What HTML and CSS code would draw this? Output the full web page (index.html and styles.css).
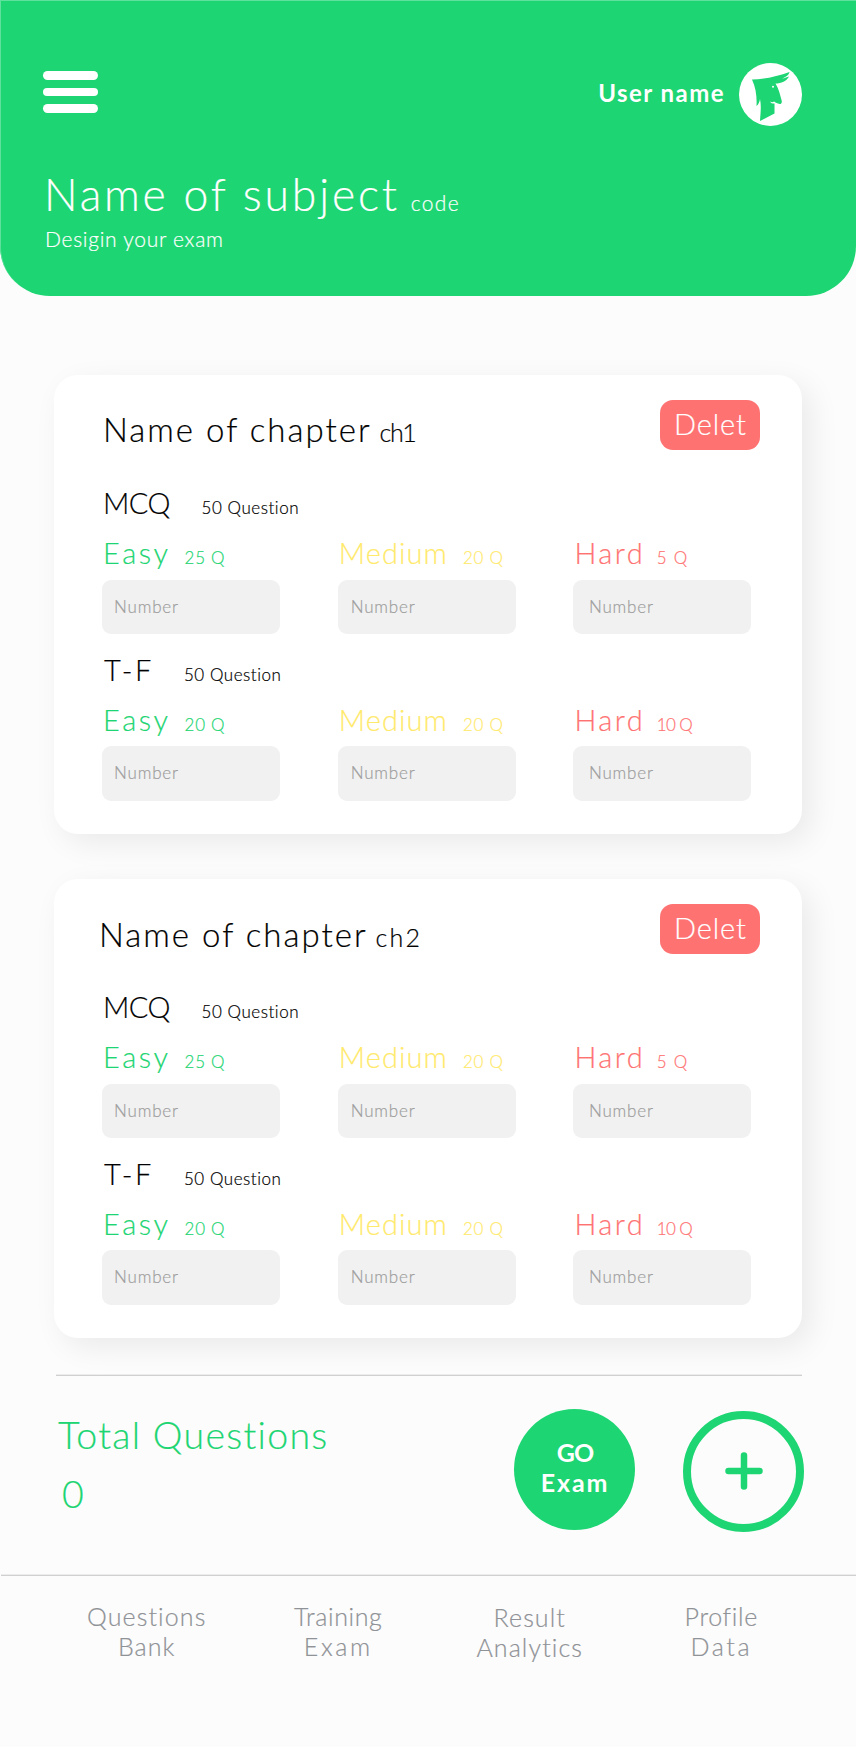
FILE: index.html
```html
<!DOCTYPE html>
<html lang="en">
<head>
<meta charset="utf-8">
<title>Design your exam</title>
<link rel="stylesheet" href="styles.css">
</head>
<body>
<header class="header">
  <div class="topbar">
    <div class="menu"><i></i><i></i><i></i></div>
    <div class="user">
      <span class="user-name">User name</span>
      <svg class="avatar" viewBox="0 0 63 63">
        <circle cx="31.5" cy="31.5" r="31.5" fill="#fff"/>
        <path fill="#1dd572" d="M13 16.5 C26 16.5 39 13 50.500 9 C50 12 47 14 43 15.500 C46 15.200 48 14 50 13.500 C48 18 42 20.500 36.500 20.500 C40 26 41 32 42.800 38 C43 41 41 41.500 39 40.500 C37 40 35.500 38.800 35 38.500 C34 39.500 32.500 39.500 31 38.500 C32 40.500 34 40.700 35.500 40.500 L35.500 50.500 L21 58 C21.500 50 22.500 43 21 36 C20.500 39 19.500 41.500 17.500 43 C18 34 17 25 13 16.500 Z"/>
        <circle cx="34" cy="23.800" r="1" fill="#fff"/>
      </svg>
    </div>
  </div>
  <h1 class="title">Name of subject<span class="code">code</span></h1>
  <p class="subtitle">Desigin your exam</p>
</header>

<main class="main">
  <section class="card">
    <div class="card-head">
      <h2 class="chapter">Name of chapter<span class="chapter-code one">ch1</span></h2>
      <span class="delete">Delet</span>
    </div>
    <div class="group">
      <h3 class="kind mcq">MCQ<small>50 Question</small></h3>
      <div class="levels">
        <div class="level easy"><div class="label">Easy<small>25 Q</small></div><div class="field">Number</div></div>
        <div class="level medium"><div class="label">Medium<small>20 Q</small></div><div class="field">Number</div></div>
        <div class="level hard"><div class="label">Hard<small class="wide">5 Q</small></div><div class="field">Number</div></div>
      </div>
    </div>
    <div class="group">
      <h3 class="kind tf">T-F<small>50 Question</small></h3>
      <div class="levels">
        <div class="level easy"><div class="label">Easy<small>20 Q</small></div><div class="field">Number</div></div>
        <div class="level medium"><div class="label">Medium<small>20 Q</small></div><div class="field">Number</div></div>
        <div class="level hard"><div class="label">Hard<small class="tight">10 Q</small></div><div class="field">Number</div></div>
      </div>
    </div>
  </section>

  <section class="card second">
    <div class="card-head">
      <h2 class="chapter">Name of chapter<span class="chapter-code two">ch2</span></h2>
      <span class="delete">Delet</span>
    </div>
    <div class="group">
      <h3 class="kind mcq">MCQ<small>50 Question</small></h3>
      <div class="levels">
        <div class="level easy"><div class="label">Easy<small>25 Q</small></div><div class="field">Number</div></div>
        <div class="level medium"><div class="label">Medium<small>20 Q</small></div><div class="field">Number</div></div>
        <div class="level hard"><div class="label">Hard<small class="wide">5 Q</small></div><div class="field">Number</div></div>
      </div>
    </div>
    <div class="group">
      <h3 class="kind tf">T-F<small>50 Question</small></h3>
      <div class="levels">
        <div class="level easy"><div class="label">Easy<small>20 Q</small></div><div class="field">Number</div></div>
        <div class="level medium"><div class="label">Medium<small>20 Q</small></div><div class="field">Number</div></div>
        <div class="level hard"><div class="label">Hard<small class="tight">10 Q</small></div><div class="field">Number</div></div>
      </div>
    </div>
  </section>

  <section class="summary">
    <div class="total">Total Questions<div class="total-value">0</div></div>
    <div class="go"><span class="go-top">GO</span><span>Exam</span></div>
    <div class="add">
      <svg viewBox="0 0 38 38" width="38" height="38"><path d="M19 3.500V34.500M3.500 19H34.500" stroke="#1dd572" stroke-width="6.500" stroke-linecap="round"/></svg>
    </div>
  </section>
</main>

<nav class="nav">
  <div class="nav-item">Questions<br>Bank</div>
  <div class="nav-item training">Training<br><span class="loose">Exam</span></div>
  <div class="nav-item result">Result<br>Analytics</div>
  <div class="nav-item profile">Profile<br><span class="loose">Data</span></div>
</nav>
</body>
</html>
```
FILE: styles.css
```css
* { box-sizing: border-box; margin: 0; padding: 0; }
body {
  width: 856px;
  height: 1747px;
  background: #fcfcfc;
  color: #000;
  font-family: Lato, "Liberation Sans", sans-serif;
  font-weight: 300;
  font-kerning: normal;
  -webkit-text-stroke: 0.2px currentColor;
}
small { font-size: 17px; letter-spacing: 0.72px; }

/* Header */
.header {
  height: 296px;
  padding: 62px 54px 0 43px;
  background: #1dd572;
  border-radius: 0 0 50px 50px;
  box-shadow: inset 1px 1px 0 #5fe09c;
  color: #fff;
}
.topbar { display: flex; justify-content: space-between; height: 64px; }
.menu { display: flex; flex-direction: column; gap: 8px; padding-top: 9px; }
.menu i { width: 55px; height: 8.700px; border-radius: 5px; background: #fff; }
.user { display: flex; align-items: center; gap: 14px; }
.user-name { font-size: 24px; font-weight: 700; letter-spacing: 1.470px; padding-bottom: 4px; -webkit-text-stroke: 0; }
.avatar { width: 63px; height: 63px; }
.title {
  margin-top: 41px;
  padding-left: 1px;
  font-size: 44.500px;
  font-weight: 300;
  line-height: 54px;
  height: 54px;
  letter-spacing: 2.810px;
}
.code { margin-left: 11px; font-size: 21px; letter-spacing: 1.340px; }
.subtitle { margin-top: 5px; padding-left: 2px; font-size: 21px; line-height: 26px; letter-spacing: 0.720px; }

/* Chapter cards */
.main { padding: 79px 54px 0; }
.card {
  height: 459px;
  margin-bottom: 45px;
  padding: 25px 42px 0 48px;
  border-radius: 24px;
  background: #fff;
  box-shadow: 9px 9px 30px rgba(0, 0, 0, 0.075);
}
.card-head { display: flex; justify-content: space-between; height: 85px; }
.chapter { padding: 9px 0 0 1px; font-size: 33px; font-weight: 300; line-height: 40px; letter-spacing: 2px; }
.chapter-code { margin-left: 8px; font-size: 25px; }
.one { letter-spacing: -1.400px; }
.two { letter-spacing: 2.200px; }
.delete {
  width: 100px;
  height: 50px;
  padding-left: 14px;
  border-radius: 13px;
  background: #ff7272;
  color: #fff;
  font-size: 29px;
  line-height: 47px;
  letter-spacing: 0.900px;
}
.group { margin-bottom: 17.500px; }
.kind { height: 34px; margin-bottom: 16px; padding-left: 1px; font-size: 29px; font-weight: 300; line-height: 35px; }
.kind small { letter-spacing: 0.550px; }
.mcq { letter-spacing: -0.500px; }
.mcq small { margin-left: 31.500px; }
.tf { padding-left: 2px; letter-spacing: 2.600px; }
.tf small { margin-left: 30px; }
.levels { display: grid; grid-template-columns: repeat(3, 178px); column-gap: 57.700px; }
.label { height: 34px; margin-bottom: 10.500px; padding-left: 1px; font-size: 29px; line-height: 35px; white-space: nowrap; }
.easy .label { color: #1dd572; letter-spacing: 2.600px; }
.easy small { margin-left: 14px; }
.medium .label { color: #ffea6b; letter-spacing: 1.100px; }
.medium small { margin-left: 15px; }
.hard .label { color: #ff7272; letter-spacing: 2.500px; }
.hard small { margin-left: 11.500px; }
.label .wide { letter-spacing: 1.260px; }
.label .tight { letter-spacing: -0.600px; }
.field {
  height: 54.500px;
  padding-left: 12px;
  border-radius: 9px;
  background: #f1f1f1;
  color: #9d9d9d;
  font-size: 17px;
  line-height: 53px;
  letter-spacing: 0.810px;
}
.medium .field { padding-left: 13px; }
.hard .field { padding-left: 15.500px; }

.second { margin-bottom: 36px; }
.second .chapter { margin-left: -4px; padding-top: 10px; }
.second .kind, .second .label { line-height: 36px; }

/* Totals and actions */
.summary {
  display: flex;
  align-items: flex-start;
  height: 200px;
  margin: 0 -2px 0 2px;
  padding-top: 34.500px;
  background: linear-gradient(#ececec 1px, #d0d0d0 1px, #d0d0d0 2px, transparent 2px) no-repeat 0 0 / 746px 2px;
}
.total { width: 458px; margin-top: -4px; padding-left: 2px; color: #1dd572; font-size: 37.500px; line-height: 59.500px; letter-spacing: 1.290px; }
.total-value { padding-left: 4px; }
.go {
  display: flex;
  flex-direction: column;
  align-items: center;
  width: 121px;
  height: 121px;
  padding-top: 28px;
  border-radius: 50%;
  background: #1dd572;
  color: #fff;
  font-size: 25px;
  font-weight: 700;
  line-height: 30px;
  letter-spacing: 1.900px;
  text-indent: 1px;
  -webkit-text-stroke: 0;
}
.go-top { letter-spacing: -1px; }
.add {
  display: flex;
  align-items: center;
  justify-content: center;
  width: 121px;
  height: 121px;
  margin: 2px 0 0 48px;
  border: 8px solid #1dd572;
  border-radius: 50%;
}

/* Bottom navigation */
.nav {
  display: grid;
  grid-template-columns: repeat(4, 191.500px);
  height: 172.500px;
  padding: 26.500px 0 0 51px;
  background: linear-gradient(#ececec 1px, #d0d0d0 1px, #d0d0d0 2px, transparent 2px) no-repeat 1px 0 / 855px 2px;
}
.nav-item { color: #8f9296; font-size: 25px; line-height: 30px; letter-spacing: 1.100px; text-align: center; }
.training { letter-spacing: 0.610px; }
.result { padding-top: 1px; }
.profile { letter-spacing: 0.660px; }
.loose { letter-spacing: 2.600px; }
```
